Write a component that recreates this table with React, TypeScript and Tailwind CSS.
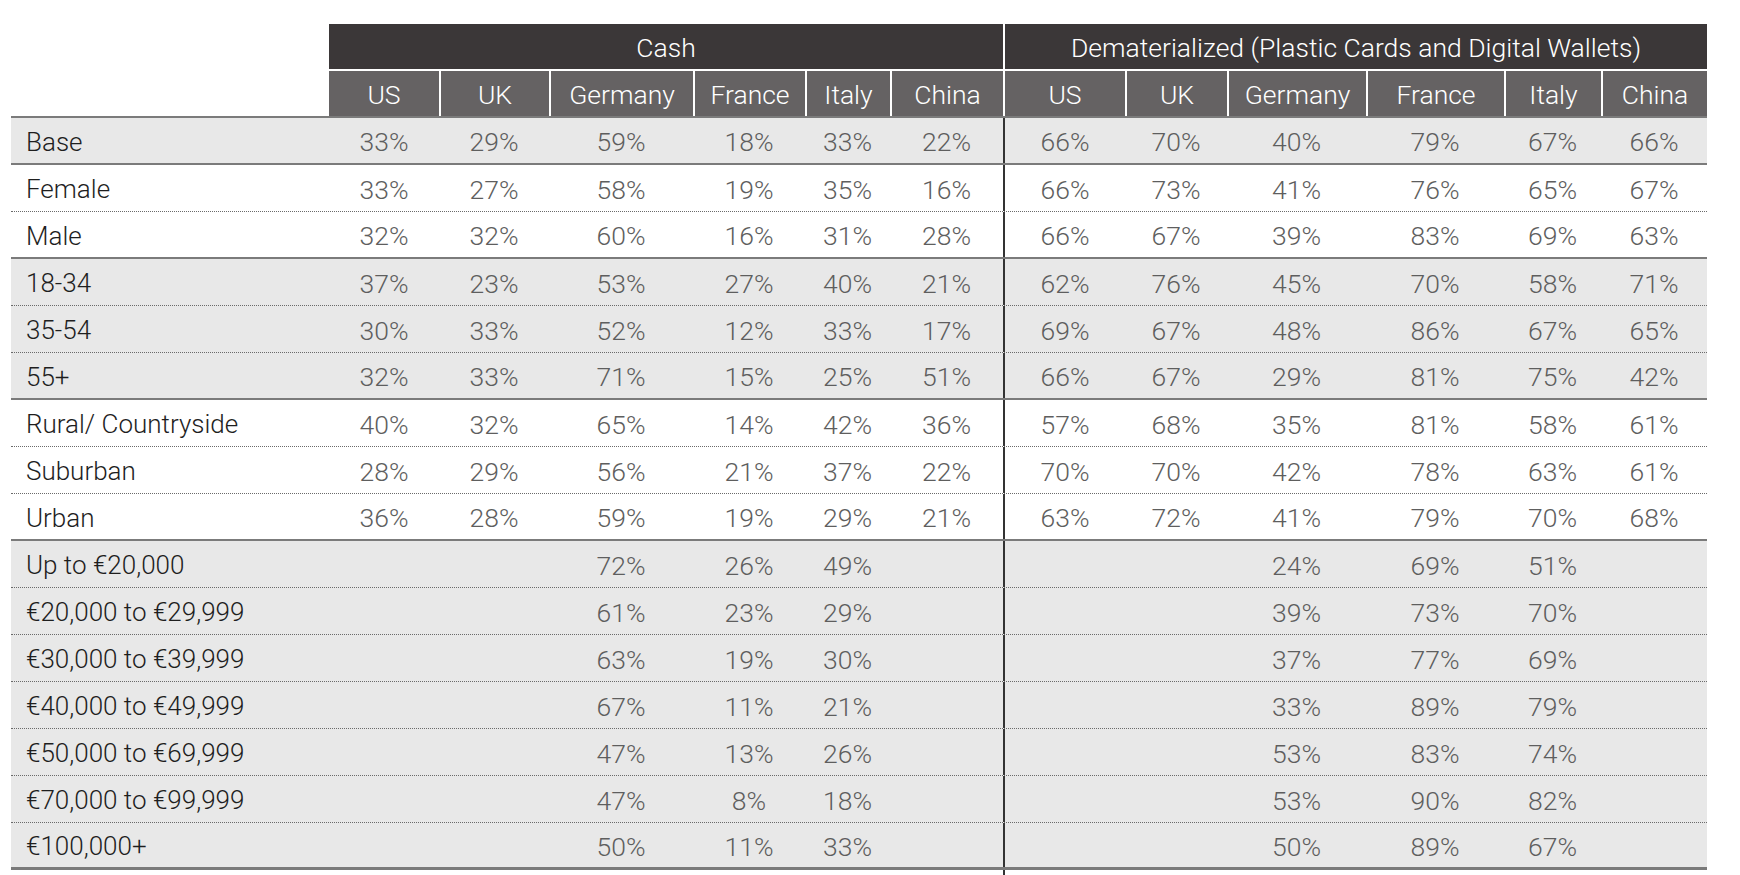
import React from 'react';

type Row = {
  label: string;
  cash: (number | null)[];
  demat: (number | null)[];
};

const countries = ['US', 'UK', 'Germany', 'France', 'Italy', 'China'];

// groups of rows, each group ends with a solid rule
const groups: { shaded: boolean; rows: Row[] }[] = [
  {
    shaded: true,
    rows: [{ label: 'Base', cash: [33, 29, 59, 18, 33, 22], demat: [66, 70, 40, 79, 67, 66] }],
  },
  {
    shaded: false,
    rows: [
      { label: 'Female', cash: [33, 27, 58, 19, 35, 16], demat: [66, 73, 41, 76, 65, 67] },
      { label: 'Male', cash: [32, 32, 60, 16, 31, 28], demat: [66, 67, 39, 83, 69, 63] },
    ],
  },
  {
    shaded: true,
    rows: [
      { label: '18-34', cash: [37, 23, 53, 27, 40, 21], demat: [62, 76, 45, 70, 58, 71] },
      { label: '35-54', cash: [30, 33, 52, 12, 33, 17], demat: [69, 67, 48, 86, 67, 65] },
      { label: '55+', cash: [32, 33, 71, 15, 25, 51], demat: [66, 67, 29, 81, 75, 42] },
    ],
  },
  {
    shaded: false,
    rows: [
      { label: 'Rural/ Countryside', cash: [40, 32, 65, 14, 42, 36], demat: [57, 68, 35, 81, 58, 61] },
      { label: 'Suburban', cash: [28, 29, 56, 21, 37, 22], demat: [70, 70, 42, 78, 63, 61] },
      { label: 'Urban', cash: [36, 28, 59, 19, 29, 21], demat: [63, 72, 41, 79, 70, 68] },
    ],
  },
  {
    shaded: true,
    rows: [
      { label: 'Up to €20,000', cash: [null, null, 72, 26, 49, null], demat: [null, null, 24, 69, 51, null] },
      { label: '€20,000 to €29,999', cash: [null, null, 61, 23, 29, null], demat: [null, null, 39, 73, 70, null] },
      { label: '€30,000 to €39,999', cash: [null, null, 63, 19, 30, null], demat: [null, null, 37, 77, 69, null] },
      { label: '€40,000 to €49,999', cash: [null, null, 67, 11, 21, null], demat: [null, null, 33, 89, 79, null] },
      { label: '€50,000 to €69,999', cash: [null, null, 47, 13, 26, null], demat: [null, null, 53, 83, 74, null] },
      { label: '€70,000 to €99,999', cash: [null, null, 47, 8, 18, null], demat: [null, null, 53, 90, 82, null] },
      { label: '€100,000+', cash: [null, null, 50, 11, 33, null], demat: [null, null, 50, 89, 67, null] },
    ],
  },
];

const cols =
  'grid grid-cols-[318px_110px_110px_144px_112px_85px_113px_122px_102px_139px_138px_97px_106px]';

const PaymentTable = () => {
  return (
    <div
      className="min-h-[875px] w-[1740px] bg-white pl-[11px] pt-[24px]"
      style={{ fontFamily: 'Roboto, "Liberation Sans", sans-serif' }}
    >
      <div className="w-[1696px]">
        {/* group header */}
        <div className={`${cols} h-[47px]`}>
          <div />
          <div className="col-span-6 flex items-center justify-center border-b-2 border-white bg-[#3b3738] pt-[3px] text-[26.5px] font-light text-white">
            Cash
          </div>
          <div className="col-span-6 flex items-center justify-center border-b-2 border-l-2 border-white bg-[#3b3738] pt-[3px] text-[26.5px] font-light text-white">
            Dematerialized (Plastic Cards and Digital Wallets)
          </div>
        </div>

        {/* country header */}
        <div className={`${cols} h-[45px]`}>
          <div />
          {[...countries, ...countries].map((c, i) => (
            <div
              key={i}
              className={`flex items-center justify-center bg-[#656263] pt-[3px] text-[26.5px] font-light text-white ${
                i > 0 ? 'border-l-2 border-white' : ''
              }`}
            >
              {c}
            </div>
          ))}
        </div>

        {/* body */}
        <div className="border-t-2 border-[#7b7b7b]">
          {groups.map((g, gi) =>
            g.rows.map((r, ri) => {
              const last = ri === g.rows.length - 1;
              const final = last && gi === groups.length - 1;
              const rule = final
                ? 'border-b-[3px] border-solid border-[#7a7a7a]'
                : last
                  ? 'border-b-2 border-solid border-[#7b7b7b]'
                  : 'border-b border-dotted border-[#6a6a6a]';
              return (
                <div
                  key={r.label}
                  className={`${cols} h-[47px] ${rule} ${g.shaded ? 'bg-[#e8e8e8]' : 'bg-white'}`}
                >
                  <div className="flex items-center pl-[15px] pt-[3px] text-[26px] font-light text-[#1e1e1e]">
                    {r.label}
                  </div>
                  {[...r.cash, ...r.demat].map((v, i) => (
                    <div
                      key={i}
                      className={`flex items-center justify-center pt-[3px] text-[26.5px] font-light text-[#5e5e5e] ${
                        i === 6 ? 'border-l-2 border-[#333]' : ''
                      }`}
                    >
                      {v === null ? '' : `${v}%`}
                    </div>
                  ))}
                </div>
              );
            }),
          )}
        </div>
        <div className="ml-[992px] h-[6px] w-[2px] bg-[#333]" />
      </div>
    </div>
  );
};

export default function App() {
  return <PaymentTable />;
}
